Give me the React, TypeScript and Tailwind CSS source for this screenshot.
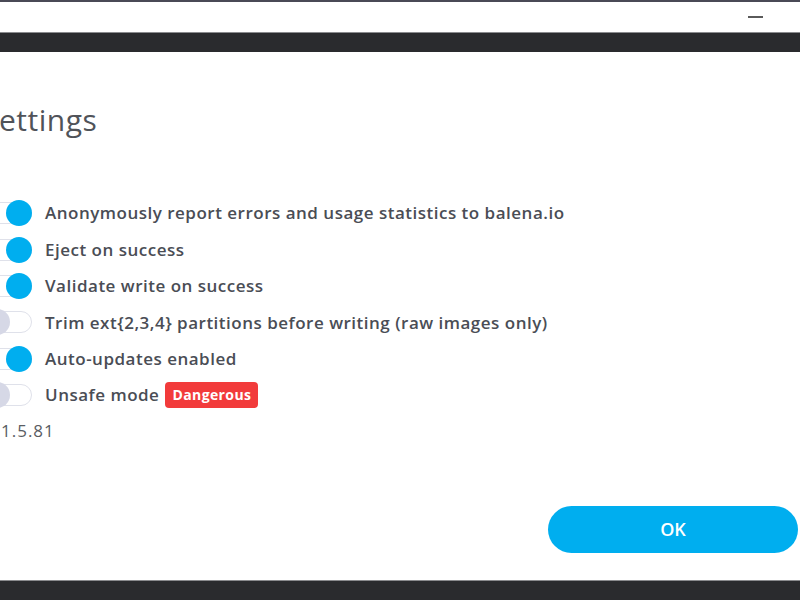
import { type ReactNode } from 'react';

// Filas de ajustes, tal como aparecen en el diálogo.
const settings: { label: string; on: boolean; badge?: string }[] = [
  { label: 'Anonymously report errors and usage statistics to balena.io', on: true },
  { label: 'Eject on success', on: true },
  { label: 'Validate write on success', on: true },
  { label: 'Trim ext{2,3,4} partitions before writing (raw images only)', on: false },
  { label: 'Auto-updates enabled', on: true },
  { label: 'Unsafe mode', on: false, badge: 'Dangerous' },
];

function Toggle({ on }: { on: boolean }) {
  return (
    <div className="relative w-[48px] h-[22px] shrink-0">
      <div className="absolute inset-0 rounded-full border border-[#dfe1ea] bg-white" />
      <div
        className={
          on
            ? 'absolute right-0 top-1/2 -translate-y-1/2 w-[26px] h-[26px] rounded-full bg-[#00aeef]'
            : 'absolute left-0 top-1/2 -translate-y-1/2 w-[26px] h-[26px] rounded-full bg-[#d6d8e6]'
        }
      />
    </div>
  );
}

function Row({ children, on }: { children: ReactNode; on: boolean }) {
  return (
    <div className="flex items-center gap-[13px] h-[36.4px]">
      <Toggle on={on} />
      <div className="flex items-center gap-[6px]">{children}</div>
    </div>
  );
}

export default function App() {
  return (
    <div
      className="w-[800px] h-[600px] overflow-hidden flex flex-col bg-white text-[#4a4d55]"
      style={{ fontFamily: '"Open Sans", "Liberation Sans", sans-serif' }}
    >
      {/* barra de título de la ventana */}
      <div className="h-[2px] bg-[#4a4a56]" />
      <div className="h-[30px] flex items-center justify-end pr-[37px]">
        <div className="w-[15px] h-[2px] bg-[#5a5a5a]" />
      </div>
      <div className="h-[20px] bg-[#2a2b2e] border-t border-[#8a8b8e]" />

      {/* contenido del diálogo */}
      <div className="flex-1 flex flex-col -ml-[16px] pt-[49px]">
        <h1 className="text-[30px] leading-[38px] h-[38px] tracking-[0.5px] text-[#505359] -ml-[2px]">
          Settings
        </h1>

        <div className="mt-[56px] flex flex-col">
          {settings.map((s) => (
            <Row key={s.label} on={s.on}>
              <span className="text-[17px] tracking-[0.5px] font-[600]">{s.label}</span>
              {s.badge && (
                <span className="bg-[#f23b3b] text-white text-[14px] tracking-[0.4px] font-bold leading-[26px] px-[7px] rounded-[4px]">
                  {s.badge}
                </span>
              )}
            </Row>
          ))}
        </div>

        <div className="mt-[8px] ml-[17px] text-[17px] tracking-[1px] leading-[20px] text-[#5a5d63]">1.5.81</div>

        <div className="flex-1 flex items-end justify-end pb-[27px] pr-[2px]">
          <button className="w-[250px] h-[47px] rounded-full bg-[#00aeef] text-white text-[18px] font-semibold">
            OK
          </button>
        </div>
      </div>

      <div className="h-[20px] bg-[#2a2b2e] border-t border-[#8a8b8e]" />
    </div>
  );
}
